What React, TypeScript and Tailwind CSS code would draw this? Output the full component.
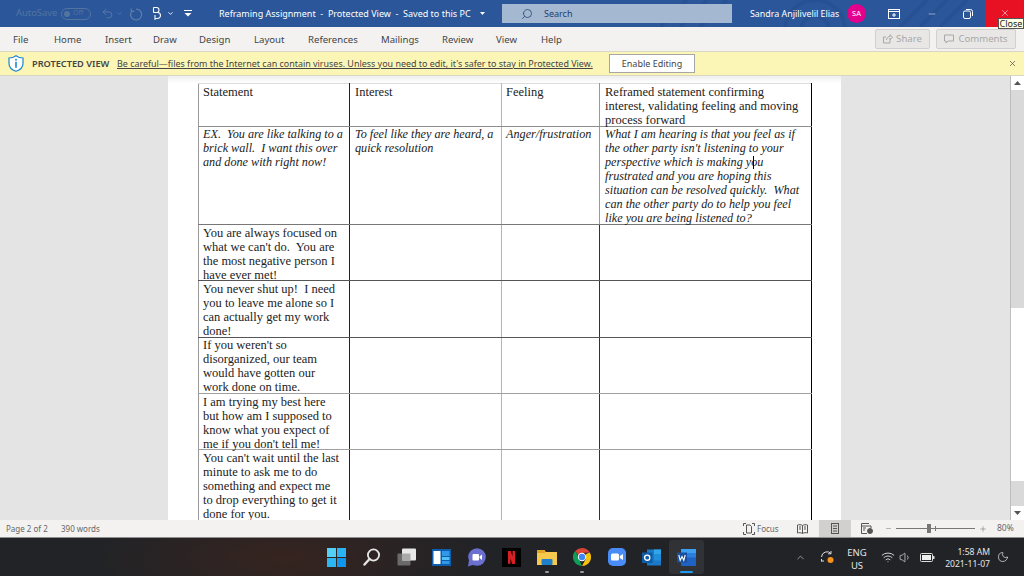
import React from "react";
import { Search, Undo2, ChevronDown, X, Minus, Plus, ChevronUp, Wifi, Volume1, Moon } from "lucide-react";

const ui = "font-['Noto_Sans',sans-serif]";

const tabs: [string, string][] = [
  ["File", "w-[41px]"], ["Home", "w-[51px]"], ["Insert", "w-[48px]"], ["Draw", "w-[46px]"], ["Design", "w-[55px]"],
  ["Layout", "w-[54px]"], ["References", "w-[73px]"], ["Mailings", "w-[61px]"], ["Review", "w-[54px]"], ["View", "w-[45px]"], ["Help", "w-[40px]"],
];

type RowData = { h: string; cells: string[][]; italic?: boolean; line: string; head?: boolean; lightCol4?: boolean; pad: string };
const rows: RowData[] = [
  {
    h: "h-[43px]", line: "border-b-[#8c8c8c]", head: true, lightCol4: true, pad: "pt-[1px]",
    cells: [["Statement"], ["Interest"], ["Feeling"], ["Reframed statement confirming", "interest, validating feeling and moving", "process forward"]],
  },
  {
    h: "h-[98px]", italic: true, line: "border-b-[#777]", lightCol4: true, pad: "pt-0",
    cells: [
      ["EX.  You are like talking to a", "brick wall.  I want this over", "and done with right now!"],
      ["To feel like they are heard, a", "quick resolution"],
      ["Anger/frustration"],
      ["What I am hearing is that you feel as if", "the other party isn't listening to your", "perspective which is making you", "frustrated and you are hoping this", "situation can be resolved quickly.  What", "can the other party do to help you feel", "like you are being listened to?"],
    ],
  },
  { h: "h-[56px]", line: "border-b-[#555]", pad: "pt-[1px]", cells: [["You are always focused on", "what we can't do.  You are", "the most negative person I", "have ever met!"], [], [], []] },
  { h: "h-[57px]", line: "border-b-[#555]", pad: "pt-[1px]", cells: [["You never shut up!  I need", "you to leave me alone so I", "can actually get my work", "done!"], [], [], []] },
  { h: "h-[56px]", line: "border-b-[#a0a0a0]", pad: "pt-0", cells: [["If you weren't so", "disorganized, our team", "would have gotten our", "work done on time."], [], [], []] },
  { h: "h-[56px]", line: "border-b-[#a0a0a0]", pad: "pt-[1px]", cells: [["I am trying my best here", "but how am I supposed to", "know what you expect of", "me if you don't tell me!"], [], [], []] },
  { h: "h-[72px]", line: "border-b-transparent", pad: "pt-[1px]", cells: [["You can't wait until the last", "minute to ask me to do", "something and expect me", "to drop everything to get it", "done for you."], [], [], []] },
];

const colWidth = ["w-[151px]", "w-[152px]", "w-[98px]", "w-[212px]"];
const colLine = ["border-r-[#222]", "border-r-[#b5b5b5]", "border-r-[#333]", "border-r-black"];
const colPad = ["pl-[4px]", "pl-[5px]", "pl-[4px]", "pl-[5px]"];

function DocTable() {
  return (
    <table className="ml-[30px] mt-[7px] w-[613px] table-fixed border-collapse font-['Liberation_Serif',serif] text-[12.5px] leading-[14px] text-[#222]">
      <tbody>
        {rows.map((r, i) => (
          <tr key={i} className={r.h}>
            {r.cells.map((c, j) => (
              <td
                key={j}
                className={`${colWidth[j]} ${r.lightCol4 && j === 2 ? "border-r-[#999]" : colLine[j]} border-r border-b ${r.line} ${j === 0 ? "border-l border-l-[#999]" : ""} ${r.head ? "border-t border-t-[#ddd]" : ""} p-0 align-top whitespace-pre ${r.italic ? "text-[12.2px] italic" : ""}`}
              >
                <div className={`h-[30px] ${r.pad} ${colPad[j]}`}>
                  {c.map((l, k) => <div key={k}>{l}</div>)}
                </div>
              </td>
            ))}
          </tr>
        ))}
      </tbody>
    </table>
  );
}

function TitleBar() {
  return (
    <div className={`relative flex h-[27px] items-center bg-[#2b579a] text-[9px] text-white ${ui}`}>
      <svg className="absolute left-[660px] top-0 h-[27px] w-[330px] opacity-30" viewBox="0 0 330 27" fill="none" stroke="#1f4684" strokeWidth="4">
        <circle cx="155" cy="30" r="14" />
        <circle cx="155" cy="30" r="30" />
        <path d="M0 27 L27 0 M20 27 L47 0 M40 27 L67 0 M240 27 L267 0 M260 27 L287 0 M280 27 L307 0" />
      </svg>
      <span className="relative ml-[16px] w-[45px] text-[9.4px] text-[#53749f]">AutoSave</span>
      <div className="relative flex h-[12px] w-[30px] items-center gap-[3px] rounded-full border border-[#53749f] pl-[2px] text-[7px] text-[#53749f]">
        <span className="h-[6px] w-[6px] rounded-full bg-[#53749f]" />
        <span>Off</span>
      </div>
      <Undo2 className="relative ml-[10px] h-[13px] w-[13px] text-[#6582aa]" strokeWidth={1.4} />
      <ChevronDown className="relative ml-[2px] h-[7px] w-[7px] text-[#6582aa]" />
      <svg className="relative ml-[6px] h-[14px] w-[14px]" viewBox="0 0 14 14" fill="none" stroke="#6582aa" strokeWidth="1.1">
        <path d="M7 2 A5.5 5.5 0 1 1 2.5 4.5 M2 1.5 L2.5 4.5 L5.5 4" />
      </svg>
      <svg className="relative ml-[8px] h-[15px] w-[11px]" viewBox="0 0 11 15" fill="none" stroke="#fff" strokeWidth="1.1">
        <path d="M2.5 1.5 h3 a2 2 0 0 1 0 5 h-3 M2.5 6.5 v-5 M2.5 6.5 h4 a2.5 2.5 0 0 1 0 6 h-2 M4 9 v5" />
      </svg>
      <ChevronDown className="relative ml-[5px] h-[7px] w-[7px]" strokeWidth={3} />
      <svg className="relative ml-[10px] h-[7px] w-[8px]" viewBox="0 0 8 7" fill="white"><rect x="0" y="0" width="8" height="1" /><path d="M0.5 3 H7.5 L4 6.5 Z" /></svg>
      <span className="relative ml-[27px] w-[253px] whitespace-pre text-[9px]">Reframing Assignment  -  Protected View  -  Saved to this PC</span>
      <svg className="relative ml-[8px] h-[3px] w-[5px]" viewBox="0 0 5 3" fill="white"><path d="M0 0 H5 L2.5 3 Z" /></svg>
      <div className="relative ml-[17px] flex h-[19px] w-[230px] items-center bg-[#a4b8d1] text-[#1f3f6e]">
        <Search className="ml-[19px] h-[12px] w-[12px] -scale-x-100 text-[#1f3f6e]" strokeWidth={1.5} />
        <span className="ml-[11px] text-[9px]">Search</span>
      </div>
      <span className="relative ml-[18px] w-[97px] whitespace-nowrap text-[8.9px]">Sandra Anjilivelil Elias</span>
      <div className="relative flex h-[19px] w-[19px] items-center justify-center rounded-full bg-[#e3008c] text-[7.5px]">SA</div>
      <svg className="relative ml-[22px] h-[10px] w-[12px]" viewBox="0 0 12 10" fill="none" stroke="#fff"><rect x="0.5" y="0.5" width="11" height="9" /><path d="M0.5 2.5 H11.5 M6 4 V8 M4 6 H8" /></svg>
      <Minus className="relative ml-[27px] h-[10px] w-[10px]" strokeWidth={1.2} />
      <svg className="relative ml-[26px] h-[10px] w-[10px]" viewBox="0 0 10 10" fill="none" stroke="#fff"><rect x="0.5" y="2" width="7" height="7.5" rx="1.5" /><path d="M3 0.5 H7.5 A2 2 0 0 1 9.5 2.5 V7" /></svg>
      <div className="relative ml-[13px] flex h-[27px] w-[37px] justify-center bg-[#e81123] pt-[8px]">
        <X className="h-[10px] w-[10px]" strokeWidth={1.3} />
      </div>
      <div className="absolute left-[998px] top-[18px] z-10 flex h-[11px] w-[26px] items-center justify-center border border-[#555] bg-[#ffffe1] text-[9px] leading-none text-[#222]">Close</div>
    </div>
  );
}

function Ribbon() {
  return (
    <div className={`flex h-[24px] items-center bg-[#f3f2f1] pl-[13px] text-[9.6px] text-[#444] ${ui}`}>
      {tabs.map(([t, w]) => <span key={t} className={`${w} pt-[3px]`}>{t}</span>)}
      <div className="ml-[294px] flex h-[20px] w-[55px] items-center justify-center gap-[3px] rounded-[2px] border border-[#d2d0ce] bg-[#e8e7e6] text-[9.6px] text-[#a8a8a8]">
        <svg className="h-[10px] w-[10px]" viewBox="0 0 10 10" fill="none" stroke="#a8a8a8"><path d="M7 4.5 V9 H0.5 V3 H3 M3.5 6 C3.5 3.5 5.5 2.5 7 2.5 V0.7 L9.6 3.2 L7 5.5 V4" /></svg>
        Share
      </div>
      <div className="ml-[6px] flex h-[20px] w-[80px] items-center justify-center gap-[4px] rounded-[2px] border border-[#d2d0ce] bg-[#e8e7e6] text-[9.6px] text-[#a8a8a8]">
        <svg className="h-[10px] w-[10px]" viewBox="0 0 10 10" fill="none" stroke="#a8a8a8"><path d="M0.5 1 H9.5 V7 H4 L2 9 V7 H0.5 Z" /></svg>
        Comments
      </div>
    </div>
  );
}

function ProtectedBar() {
  return (
    <div className={`flex h-[25px] items-center border-y border-y-[#d9d7c4] bg-[#fcf6b6] text-[#444] ${ui}`}>
      <svg className="ml-[8px] h-[17px] w-[16px]" viewBox="0 0 16 17">
        <path d="M8 0.7 C6 2.2 3.5 3 1 3 V8.5 C1 12 4 15 8 16.3 C12 15 15 12 15 8.5 V3 C12.5 3 10 2.2 8 0.7 Z" fill="#fff" stroke="#1a86d0" strokeWidth="1.2" />
        <rect x="7.2" y="3.8" width="1.6" height="1.8" fill="#1a86d0" />
        <rect x="7.2" y="6.8" width="1.6" height="6" fill="#1a86d0" />
      </svg>
      <span className="ml-[8px] w-[85px] whitespace-nowrap text-[9.2px] font-semibold">PROTECTED VIEW</span>
      <span className="w-[492px] whitespace-nowrap text-[8.94px] underline">Be careful—files from the Internet can contain viruses. Unless you need to edit, it's safer to stay in Protected View.</span>
      <div className="flex h-[19px] w-[86px] items-center justify-center border border-[#a6a6a6] bg-white text-[9px] text-[#444]">Enable Editing</div>
      <X className="ml-[313px] h-[9px] w-[9px] text-[#555]" strokeWidth={2} />
    </div>
  );
}

function Scrollbar() {
  return (
    <div className="ml-[2px] flex w-[14px] flex-col border-l border-l-[#bdbdbd] bg-[#d9d9d9]">
      <div className="flex h-[14px] items-center justify-center bg-white"><svg className="h-[4px] w-[7px]" viewBox="0 0 7 4" fill="#555"><path d="M3.5 0 L7 4 H0 Z" /></svg></div>
      <div className="mt-[218px] h-[173px] bg-white" />
      <div className="mt-[25px] flex h-[14px] items-center justify-center bg-white"><svg className="h-[4px] w-[7px]" viewBox="0 0 7 4" fill="#555"><path d="M0 0 H7 L3.5 4 Z" /></svg></div>
    </div>
  );
}

function StatusBar() {
  return (
    <div className={`flex h-[18px] items-center border-b border-b-[#8f8f8f] bg-[#f3f2f1] text-[8px] text-[#666] ${ui}`}>
      <span className="ml-[6px] w-[55px]">Page 2 of 2</span>
      <span className="w-[682px]">390 words</span>
      <svg className="h-[12px] w-[12px]" viewBox="0 0 12 12" fill="none" stroke="#555"><path d="M0.5 3 V0.5 H3 M9 0.5 H11.5 V3 M0.5 9 V11.5 H3 M9 11.5 H11.5 V9 M3.5 2 H7 L8.5 3.5 V10 H3.5 Z" /></svg>
      <span className="ml-[2px] w-[40px]">Focus</span>
      <svg className="h-[10px] w-[11px]" viewBox="0 0 11 10" fill="none" stroke="#555"><path d="M5.5 1.5 C4 0.5 2 0.5 0.5 1 V9 C2 8.5 4 8.5 5.5 9.5 C7 8.5 9 8.5 10.5 9 V1 C9 0.5 7 0.5 5.5 1.5 Z M5.5 1.5 V9.5 M2 3 H4 M2 5 H4 M7 3 H9 M7 5 H9" /></svg>
      <div className="ml-[11px] flex h-[17px] w-[32px] items-center justify-center bg-[#d2d0ce]">
        <svg className="h-[11px] w-[8px]" viewBox="0 0 8 11" fill="none" stroke="#555"><rect x="0.5" y="0.5" width="7" height="10" /><path d="M2 3 H6 M2 5.5 H6 M2 8 H6" /></svg>
      </div>
      <svg className="ml-[10px] h-[11px] w-[12px]" viewBox="0 0 12 11" fill="none" stroke="#555"><path d="M8 0.5 H0.5 V10.5 H6 M0.5 3 H10 V5 M2 5 H5 M2 7 H4" /><circle cx="9" cy="8" r="2.5" fill="#555" /></svg>
      <Minus className="ml-[12px] h-[7px] w-[7px]" strokeWidth={1.5} />
      <div className="relative ml-[4px] h-[1px] w-[79px] bg-[#777]">
        <div className="absolute left-[31px] top-[-4px] h-[9px] w-[4px] bg-[#777]" />
        <div className="absolute left-[39px] top-[-2px] h-[5px] w-[1px] bg-[#777]" />
      </div>
      <Plus className="ml-[4px] h-[8px] w-[8px]" strokeWidth={1.5} />
      <span className="ml-[10px] text-[8.5px]">80%</span>
    </div>
  );
}

function Slot({ children, dot, active }: { children: React.ReactNode; dot?: boolean; active?: boolean }) {
  return (
    <div className={`relative flex h-[34px] w-[35px] items-center justify-center rounded-[3px] ${active ? "bg-[#303236]" : ""}`}>
      {children}
      {dot && <span className="absolute bottom-[1px] h-[2px] w-[4px] rounded-full bg-[#9a9a9a]" />}
      {active && <span className="absolute bottom-[1px] h-[2px] w-[13px] rounded-full bg-[#1e9bf0]" />}
    </div>
  );
}

function Taskbar() {
  return (
    <div className={`flex h-[38px] flex-1 items-center bg-[radial-gradient(ellipse_200px_60px_at_285px_20px,#36241f_0%,#212327_100%)] text-white ${ui}`}>
      <div className="ml-[319px] flex items-center">
        <Slot>
          <svg width="19" height="19" viewBox="0 0 19 19"><rect width="9" height="9" fill="#52d0f5" /><rect x="10" width="9" height="9" fill="#2ab4f3" /><rect y="10" width="9" height="9" fill="#2cb6f4" /><rect x="10" y="10" width="9" height="9" fill="#0f96ec" /></svg>
        </Slot>
        <Slot>
          <svg width="18" height="18" viewBox="0 0 18 18" fill="none" stroke="#e6e6e6" strokeWidth="1.8"><circle cx="10.5" cy="7" r="5.6" /><path d="M6.5 11 L1.5 16.5" strokeLinecap="round" strokeWidth="2.4" /></svg>
        </Slot>
        <Slot>
          <svg width="20" height="18" viewBox="0 0 20 18"><rect x="0.5" y="5.5" width="13" height="12" rx="1" fill="#6a6a6a" /><rect x="5" y="0.5" width="14" height="12" rx="1" fill="#e8e8e8" /><rect x="5" y="5.5" width="8.5" height="7" fill="#a9a9a9" /></svg>
        </Slot>
        <Slot>
          <svg width="19" height="17" viewBox="0 0 19 17"><rect width="19" height="17" fill="#0f5cab" /><rect x="1.5" y="2" width="7" height="13" fill="#fff" /><rect x="10" y="2" width="7.5" height="5" fill="#2f9ae8" /><rect x="10" y="8" width="7.5" height="3" fill="#53c1f5" /><rect x="10" y="12" width="7.5" height="3" fill="#2f9ae8" /></svg>
        </Slot>
        <Slot>
          <svg width="19" height="19" viewBox="0 0 19 19"><circle cx="10" cy="9" r="8.8" fill="#6b6fd0" /><path d="M2 12 L1 18.5 L7 16.5 Z" fill="#6b6fd0" /><rect x="5.5" y="6" width="6.5" height="6.5" rx="1" fill="#fff" /><path d="M12.5 8.5 L15 6.5 V12 L12.5 10 Z" fill="#fff" /></svg>
        </Slot>
        <Slot>
          <svg width="19" height="19" viewBox="0 0 19 19"><rect width="19" height="19" fill="#000" /><path d="M6 3 H8.7 L13 16 H10.3 Z M6 3 H8.5 V15.5 L6 16 Z M10.5 3 H13 V16 L10.5 15.5 Z" fill="#d81f26" /></svg>
        </Slot>
        <Slot dot>
          <svg width="20" height="17" viewBox="0 0 20 17"><path d="M0 1 H7 L9 3 H20 V16 H0 Z" fill="#f6c94e" /><rect y="1" width="8" height="3" fill="#e0a526" /><rect x="4.5" y="10" width="11" height="6" rx="1" fill="#1f80c8" /></svg>
        </Slot>
        <Slot dot>
          <svg width="18" height="18" viewBox="0 0 18 18">
            <path d="M9 0 A9 9 0 0 1 16.8 4.5 L9 5 L5 7.5 L2.5 2.8 A9 9 0 0 1 9 0Z" fill="#db4437" />
            <path d="M16.8 4.5 A9 9 0 0 1 9 18 L12.8 11 L13 6 Z" fill="#f4c20d" />
            <path d="M2.5 2.8 L6.2 11.5 L9 18 A9 9 0 0 1 2.5 2.8Z" fill="#0f9d58" />
            <circle cx="9" cy="9" r="4.2" fill="#fff" /><circle cx="9" cy="9" r="3.2" fill="#4285f4" />
          </svg>
        </Slot>
        <Slot>
          <svg width="18" height="18" viewBox="0 0 18 18"><rect width="18" height="18" rx="5" fill="#4a8cf7" /><rect x="3" y="5.5" width="8" height="7" rx="1.5" fill="#fff" /><path d="M11.8 8 L15 6 V12 L11.8 10 Z" fill="#fff" /></svg>
        </Slot>
        <Slot>
          <svg width="19" height="17" viewBox="0 0 19 17"><rect x="5" y="0.5" width="14" height="16" fill="#1c78c8" /><rect x="12" y="0.5" width="7" height="5" fill="#32a4e8" /><rect x="12" y="5.5" width="7" height="6" fill="#1f8fd9" /><rect x="0" y="3.5" width="10.5" height="10.5" fill="#0e5ba8" /><circle cx="5.2" cy="8.7" r="2.6" fill="none" stroke="#fff" strokeWidth="1.4" /></svg>
        </Slot>
        <Slot active>
          <svg width="19" height="17" viewBox="0 0 19 17"><rect x="4" y="0" width="15" height="17" rx="1" fill="#1f62c4" /><rect x="4" y="0" width="15" height="4.5" fill="#3da0f0" /><rect x="4" y="4.5" width="15" height="4" fill="#2a7fdc" /><rect x="0" y="3.5" width="10" height="10" fill="#174e9e" /><path d="M1.8 6 L3.2 11.3 L5 7.5 L6.8 11.3 L8.2 6" stroke="#fff" strokeWidth="1.1" fill="none" /></svg>
        </Slot>
      </div>
      <ChevronUp className="ml-[91px] h-[11px] w-[11px] text-[#d5d5d5]" strokeWidth={1.4} />
      <svg className="ml-[14px]" width="15" height="15" viewBox="0 0 15 15" fill="none" stroke="#ddd"><path d="M1.5 7 A5.5 5.5 0 0 1 11 3.5 M11 1 V3.8 H8 M1.5 11 H4 M1.5 9 V11.5" /><circle cx="10.5" cy="10" r="3" fill="#f7941d" stroke="none" /></svg>
      <div className="ml-[7px] mt-[3px] flex w-[30px] flex-col items-center text-[9.5px] leading-[13px] text-[#e6e6e6]"><span>ENG</span><span>US</span></div>
      <Wifi className="ml-[9px] h-[14px] w-[14px] text-[#e8e8e8]" strokeWidth={1.5} />
      <Volume1 className="ml-[4px] h-[13px] w-[13px] text-[#e8e8e8]" strokeWidth={1.3} />
      <svg className="ml-[8px]" width="15" height="9" viewBox="0 0 15 9"><rect x="0.5" y="0.5" width="12" height="8" rx="1" fill="none" stroke="#ddd" /><rect x="2" y="2" width="9" height="5" fill="#eee" /><rect x="13" y="3" width="1.5" height="3" fill="#ddd" /></svg>
      <div className="ml-[3px] mt-[1px] flex w-[52px] flex-col items-end text-[8.6px] leading-[12px] text-[#e6e6e6]"><span className="whitespace-nowrap">1:58 AM</span><span className="whitespace-nowrap">2021-11-07</span></div>
      <Moon className="ml-[7px] h-[12px] w-[12px] text-[#e6e6e6]" strokeWidth={1.4} />
    </div>
  );
}

export default function App() {
  return (
    <div className="flex h-[576px] w-[1024px] flex-col overflow-hidden bg-white">
      <TitleBar />
      <Ribbon />
      <ProtectedBar />
      <div className="flex h-[444px] bg-[#e4e4e4]">
        <div className="relative ml-[168px] h-full w-[673px] overflow-hidden bg-[linear-gradient(#eeeeee,#ffffff_7px)]">
          <DocTable />
          <div className="absolute left-[585px] top-[80px] h-[13px] w-[1px] bg-black" />
        </div>
        <div className="w-[167px]" />
        <Scrollbar />
      </div>
      <StatusBar />
      <Taskbar />
    </div>
  );
}
